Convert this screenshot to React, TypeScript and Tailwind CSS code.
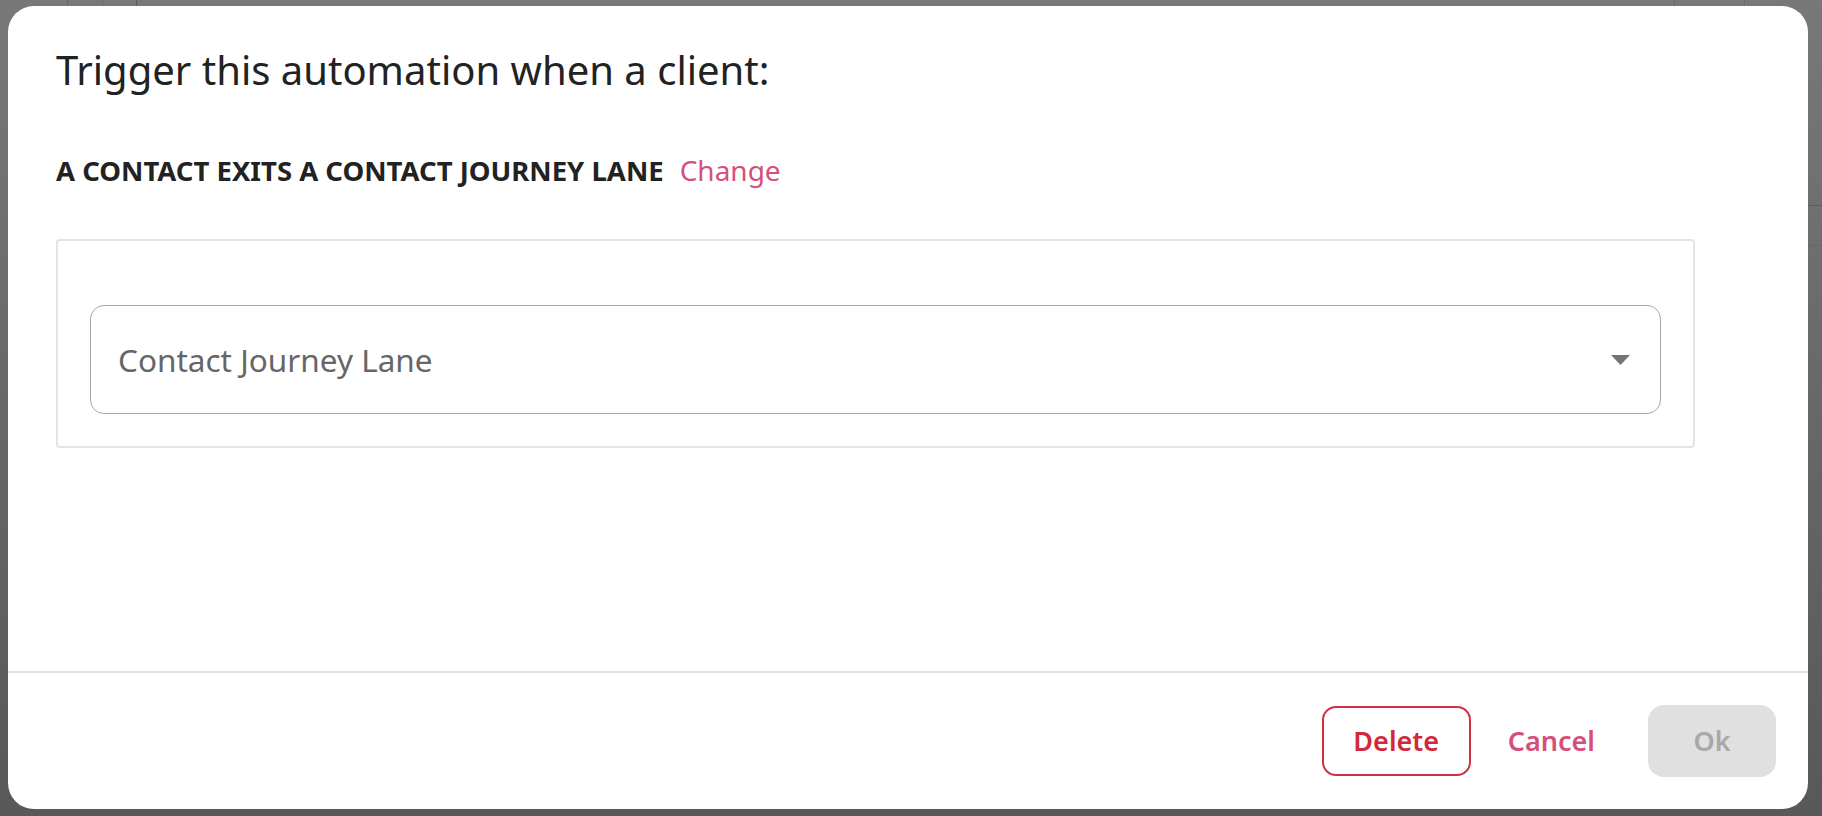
import React from "react";

const font = { fontFamily: '"Noto Sans", "Open Sans", Arial, sans-serif' };

function Backdrop() {
  // dimmed page that sits underneath the dialog
  return (
    <div className="absolute inset-0 bg-gradient-to-b from-[#787878] to-[#585858]">
      <div className="absolute left-[67px] top-0 h-[8px] w-px bg-[#666]" />
      <div className="absolute left-[102px] top-0 h-[8px] w-px bg-[#6a6a6a]" />
      <div className="absolute left-[136px] top-0 h-[8px] w-px bg-[#5e5e5e]" />
      <div className="absolute left-[1674px] top-0 h-[8px] w-px bg-[#666]" />
      <div className="absolute left-[1744px] top-0 h-[8px] w-px bg-[#6a6a6a]" />
      <div className="absolute right-0 top-[205px] h-px w-[14px] bg-[#5c5c5c]" />
      <div className="absolute right-0 top-[245px] h-px w-[14px] bg-[#666]" />
    </div>
  );
}

function Caret() {
  return (
    <svg width="19" height="10" viewBox="0 0 19 10" className="shrink-0">
      <path d="M0 0 H19 L9.5 10 Z" fill="#757575" />
    </svg>
  );
}

export default function App() {
  return (
    <div className="relative h-[816px] w-full overflow-hidden" style={font}>
      <Backdrop />
      <div className="relative pl-2 pt-[6px]">
        <div className="flex h-[803px] w-[1800px] flex-col rounded-[26px] bg-white">
          <div className="h-[665px] px-[48px] pt-[40px]">
            <h1 className="text-[40px] leading-[48px] font-[420] text-[#222222]">
              Trigger this automation when a client:
            </h1>
            <div className="mt-[58px] flex items-baseline">
              <span className="text-[27.5px] leading-[36px] font-bold text-[#222222]">
                A CONTACT EXITS A CONTACT JOURNEY LANE
              </span>
              <button className="ml-4 text-[28px] leading-[36px] text-[#d64f7b]">Change</button>
            </div>
            <div className="mt-[50px] w-[1639px] rounded-[4px] border-2 border-[#e4e4e4] px-8 pt-16 pb-8">
              <div className="flex h-[109px] items-center justify-between rounded-[14px] border-[1.5px] border-[#a8a8a8] pl-[27px] pr-[30px]">
                <span className="text-[31.5px] text-[#666666]">Contact Journey Lane</span>
                <Caret />
              </div>
            </div>
          </div>
          <div className="h-[2px] bg-[#e2e2e2]" />
          <div className="flex h-[136px] items-center justify-end pr-8">
            <button className="flex h-[70px] w-[149px] items-center justify-center rounded-[14px] border-2 border-[#d3303f] text-[27px] font-semibold text-[#d2283a]">
              Delete
            </button>
            <button className="ml-[13px] flex h-[70px] items-center justify-center px-6 text-[27px] font-semibold text-[#d64f7b]">
              Cancel
            </button>
            <button className="ml-[29px] flex h-[72px] w-[128px] items-center justify-center rounded-[16px] bg-[#e0e0e0] text-[27px] font-semibold text-[#a8a8a8]">
              Ok
            </button>
          </div>
        </div>
      </div>
    </div>
  );
}
